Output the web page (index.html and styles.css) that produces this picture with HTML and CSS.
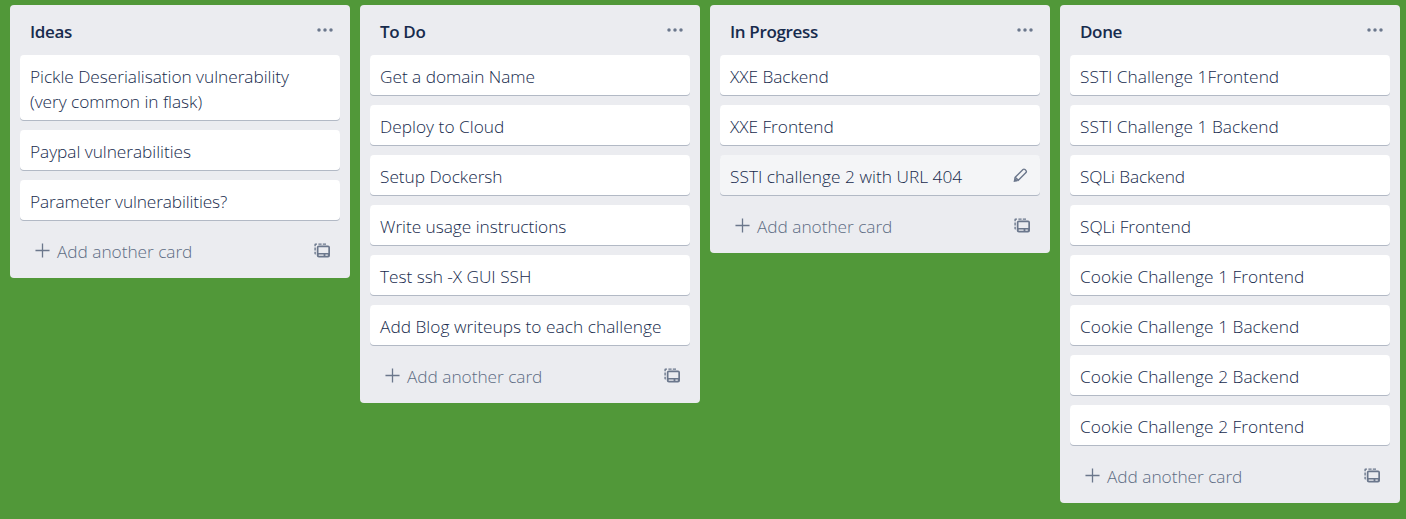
FILE: index.html
```html
<!DOCTYPE html>
<html lang="en">
<head>
<meta charset="utf-8">
<title>Board</title>
<link rel="stylesheet" href="styles.css">
</head>
<body>
<svg class="defs" aria-hidden="true">
  <symbol id="dots" viewBox="0 0 18 6"><circle cx="3" cy="3" r="1.75"/><circle cx="9" cy="3" r="1.75"/><circle cx="15" cy="3" r="1.75"/></symbol>
  <symbol id="plus" viewBox="0 0 16 16"><path d="M8 .5v15M.5 8h15" fill="none" stroke="currentColor" stroke-width="1.4"/></symbol>
  <symbol id="template" viewBox="0 0 16 15">
    <path d="M.4 3.2V1.4Q.4.4 1.4.4H3V1.8H1.8V3.2zM4.4.4h3.2v1.4H4.4zM8.8.4H12v1.4H8.8zM.4 4.4h1.4v3.2H.4zM.4 8.7h1.4v2.8H1.4Q.4 11.5.4 10.5z"/>
    <path fill-rule="evenodd" d="M5 2.5h9Q16 2.5 16 4.5V12.5Q16 14.5 14 14.5H5Q2.8 14.5 2.8 12.5V4.5Q2.8 2.5 5 2.5zM4.5 4.2V10H14.3V4.2zM4.7 11.6V12.7H9.6V11.6zM11.4 11.6V12.7H13.8V11.6z"/>
  </symbol>
  <symbol id="pencil" viewBox="0 0 15 15">
    <path d="M2.2 9.2 10 1.5Q11 .7 12 1.6L13 2.6Q13.8 3.6 13 4.6L5.3 12.3z" fill="none" stroke="currentColor" stroke-width="1.4"/>
    <path d="M1.4 9.2 5.4 13.1.6 14Z"/>
  </symbol>
</svg>
<main class="board">
  <section class="list">
    <header class="list-header"><h2>Ideas</h2><svg class="dots"><use href="#dots"/></svg></header>
    <div class="cards">
      <div class="card">Pickle Deserialisation vulnerability<br>(very common in flask)</div>
      <div class="card">Paypal vulnerabilities</div>
      <div class="card snug">Parameter vulnerabilities?</div>
    </div>
    <footer class="list-footer"><svg class="plus"><use href="#plus"/></svg><span>Add another card</span><svg class="template"><use href="#template"/></svg></footer>
  </section>
  <section class="list">
    <header class="list-header"><h2>To Do</h2><svg class="dots"><use href="#dots"/></svg></header>
    <div class="cards">
      <div class="card">Get a domain Name</div>
      <div class="card loose">Deploy to Cloud</div>
      <div class="card">Setup Dockersh</div>
      <div class="card">Write usage instructions</div>
      <div class="card">Test ssh -X GUI SSH</div>
      <div class="card loose">Add Blog writeups to each challenge</div>
    </div>
    <footer class="list-footer"><svg class="plus"><use href="#plus"/></svg><span>Add another card</span><svg class="template"><use href="#template"/></svg></footer>
  </section>
  <section class="list">
    <header class="list-header"><h2>In Progress</h2><svg class="dots"><use href="#dots"/></svg></header>
    <div class="cards">
      <div class="card">XXE Backend</div>
      <div class="card">XXE Frontend</div>
      <div class="card card-active loose"><span>SSTI challenge 2 with URL 404</span><svg class="pencil"><use href="#pencil"/></svg></div>
    </div>
    <footer class="list-footer"><svg class="plus"><use href="#plus"/></svg><span>Add another card</span><svg class="template"><use href="#template"/></svg></footer>
  </section>
  <section class="list">
    <header class="list-header"><h2>Done</h2><svg class="dots"><use href="#dots"/></svg></header>
    <div class="cards">
      <div class="card loose">SSTI Challenge 1Frontend</div>
      <div class="card loose">SSTI Challenge 1 Backend</div>
      <div class="card snug">SQLi Backend</div>
      <div class="card">SQLi Frontend</div>
      <div class="card loose">Cookie Challenge 1 Frontend</div>
      <div class="card loose">Cookie Challenge 1 Backend</div>
      <div class="card loose">Cookie Challenge 2 Backend</div>
      <div class="card loose">Cookie Challenge 2 Frontend</div>
    </div>
    <footer class="list-footer"><svg class="plus"><use href="#plus"/></svg><span>Add another card</span><svg class="template"><use href="#template"/></svg></footer>
  </section>
</main>
</body>
</html>
```
FILE: styles.css
```css
* { box-sizing: border-box; }
body {
  margin: 0;
  height: 519px;
  overflow: hidden;
  background: #519839;
  color: #172b4d;
  font: 350 17.3px/25px "Open Sans", "Noto Sans", sans-serif;
  letter-spacing: -0.04px;
}
.defs { position: absolute; width: 0; height: 0; }
.board { display: flex; align-items: flex-start; gap: 10px; padding: 5px 0 0 10px; }
.list { flex: 0 0 340px; background: #ebecf0; border-radius: 4px; }
.list-header { display: flex; justify-content: space-between; height: 50px; padding: 14px 16px 0 20px; }
.list-header h2 { margin: 0; font-size: 17px; font-weight: 600; line-height: 25px; letter-spacing: -0.35px; }
svg { fill: currentColor; color: #6b778c; flex: none; }
.dots { width: 18px; height: 6px; margin-top: 8px; }
.cards { display: flex; flex-direction: column; gap: 10px; padding: 0 10px; }
.card {
  padding: 9px 10px 6px;
  background: #fff;
  border-radius: 4px;
  box-shadow: 0 1px 0 rgba(9, 30, 66, 0.25);
  white-space: nowrap;
}
.snug { letter-spacing: -0.13px; }
.loose { letter-spacing: 0.02px; }
.card-active { display: flex; justify-content: space-between; background: #f4f5f7; }
.pencil { width: 15px; height: 15px; margin: 4px 2px 0 0; }
.list-footer { display: flex; height: 58px; padding: 19px 20px 0 25px; color: #5e6c84; }
.list-footer span { margin-left: 7px; flex: 1; }
.plus { width: 15px; height: 15px; margin-top: 4px; }
.template { width: 16px; height: 15px; margin-top: 4px; }
```
